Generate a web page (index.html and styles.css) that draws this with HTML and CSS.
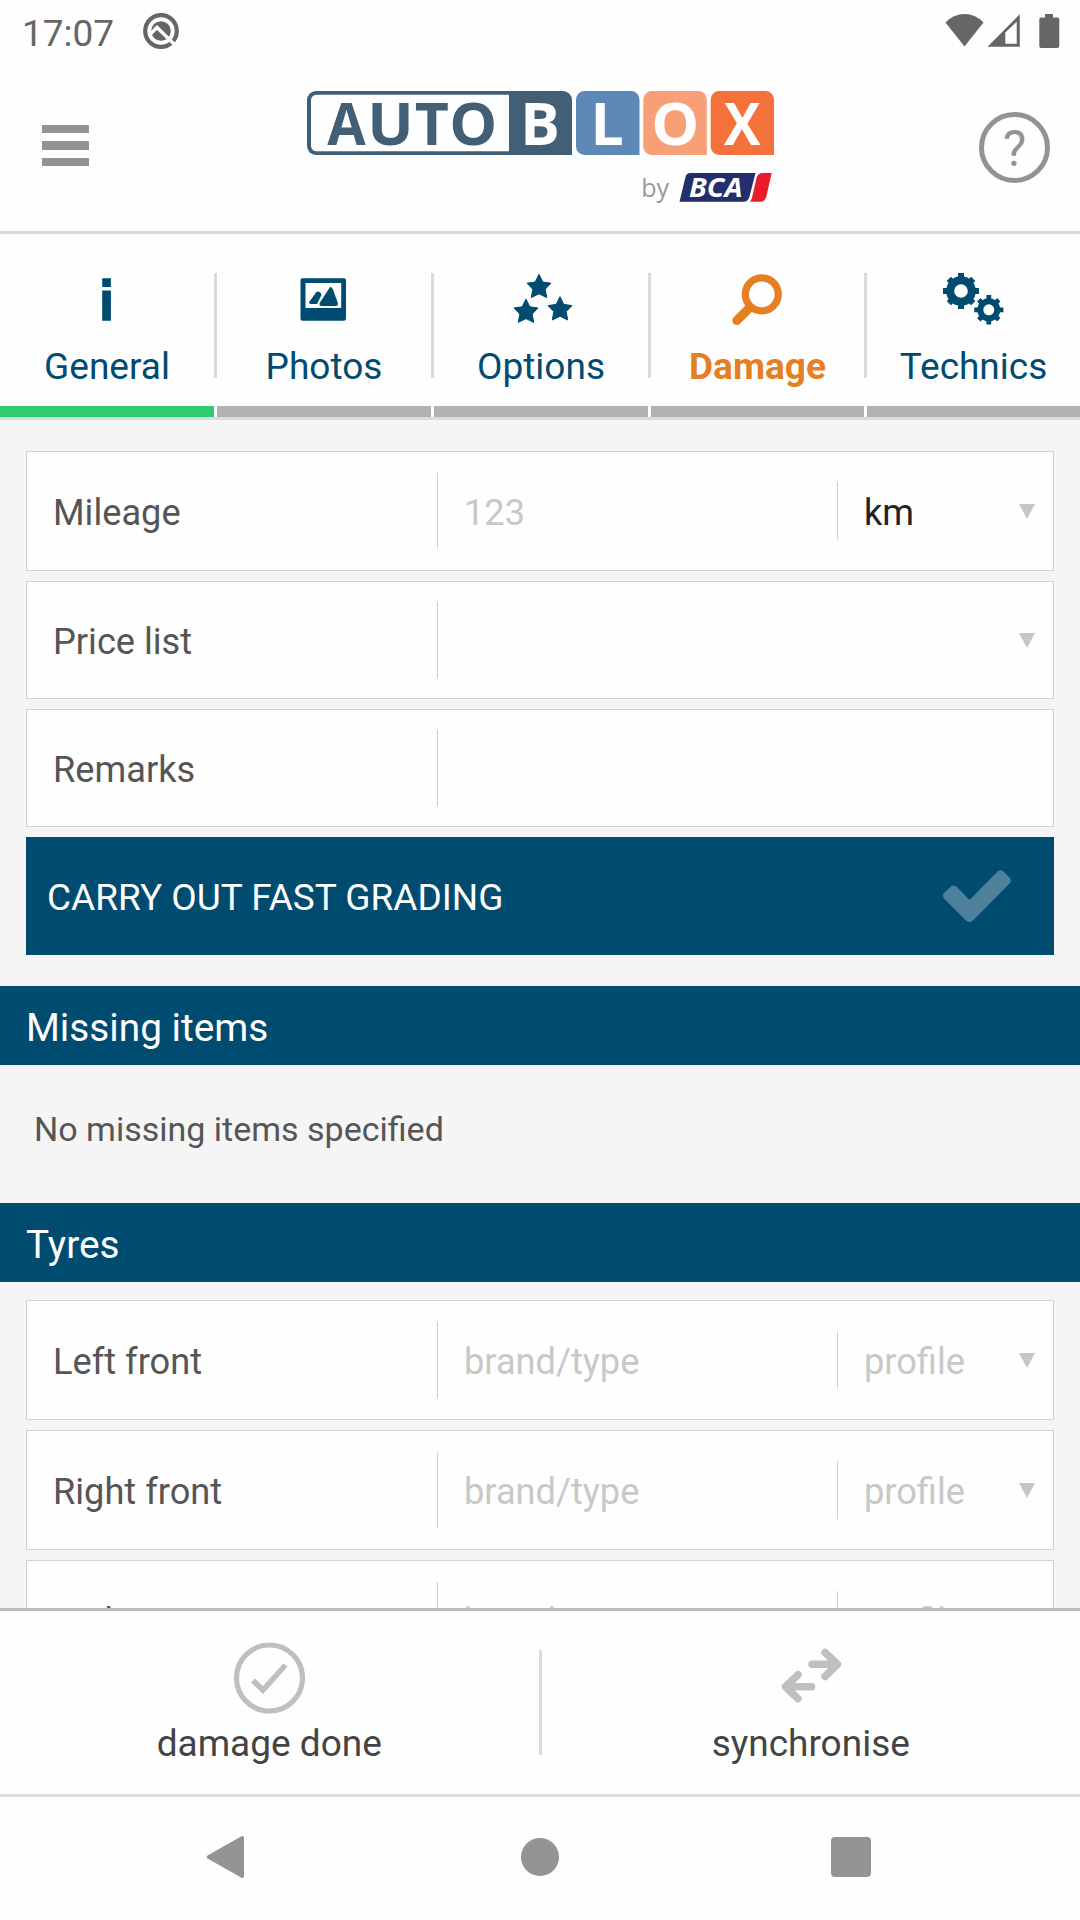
FILE: index.html
```html
<!DOCTYPE html>
<html lang="en">
<head>
<meta charset="utf-8">
<title>AutoBlox</title>
<link rel="stylesheet" href="styles.css">
</head>
<body>
<div class="statusbar">
  <div class="status-left">
    <span class="clock">17:07</span>
    <svg class="status-app" viewBox="0 0 36 36" width="36" height="36">
      <circle cx="18" cy="18" r="15.8" fill="none" stroke="#666" stroke-width="4.2"/>
      <circle cx="18" cy="18" r="9.8" fill="#666"/>
      <path d="M7.500 21 14 14.500 31 31" fill="none" stroke="#fefefe" stroke-width="3.4"/>
    </svg>
  </div>
  <svg class="status-icons" viewBox="0 0 116 36" width="116" height="36" fill="#666">
    <path d="M.5 10.500Q8.500 2 19.500 2T38.500 10.500L19.500 34.500Z"/>
    <path fill-rule="evenodd" d="M42.500 34.800H74.800V2.300ZM60.300 31.700V20.500L71.700 9.800V31.700Z"/>
    <path d="M100 2h8v3.500h4.500q1.800 0 1.800 1.800v26.900q0 1.800-1.800 1.800h-16.400q-1.800 0-1.800-1.800V7.300q0-1.800 1.800-1.800H100Z"/>
  </svg>
</div>

<header class="header">
  <div class="menu"><span class="menu-bar"></span><span class="menu-bar"></span><span class="menu-bar"></span></div>
  <svg class="logo" viewBox="307 70 468 150" width="468" height="150">
    <path fill="#435f76" d="M316 91H563a9 9 0 0 1 9 9V155H316a9 9 0 0 1-9-9V100a9 9 0 0 1 9-9Z"/>
    <path fill="#fefefe" d="M316.500 94.700H509V151.300H316.500a5.500 5.500 0 0 1-5.500-5.500V100.200a5.500 5.500 0 0 1 5.500-5.500Z"/>
    <path fill="#5d88b8" d="M584 91H631a8.500 8.500 0 0 1 8.500 8.500V155H584.500a8.500 8.500 0 0 1-8.500-8.500V99.500a8.500 8.500 0 0 1 8.500-8.500Z"/>
    <path fill="#f79f77" d="M652 91H698.300a8.500 8.500 0 0 1 8.500 8.500V155H651.800a8.500 8.500 0 0 1-8.500-8.500V99.500a8.500 8.500 0 0 1 8.500-8.500Z"/>
    <path fill="#f4713c" d="M719 91H765.500a8.500 8.500 0 0 1 8.500 8.500V155H719.200a8.500 8.500 0 0 1-8.500-8.500V99.500a8.500 8.500 0 0 1 8.500-8.500Z"/>
    <g class="logo-text" fill="#435f76">
      <text x="327.300" y="145.300" textLength="38.500" lengthAdjust="spacingAndGlyphs">A</text>
      <text x="367.200" y="145.300" textLength="46.500" lengthAdjust="spacingAndGlyphs">U</text>
      <text x="414.800" y="145.300">T</text>
      <text x="449.200" y="145.300" textLength="48" lengthAdjust="spacingAndGlyphs">O</text>
    </g>
    <g class="logo-text" fill="#fefefe">
      <text x="520.300" y="145.300">B</text>
      <text x="590.600" y="145.300">L</text>
      <text x="651.200" y="145.300" textLength="48" lengthAdjust="spacingAndGlyphs">O</text>
      <text x="724" y="145.300" textLength="36.500" lengthAdjust="spacingAndGlyphs">X</text>
    </g>
    <text class="logo-by" x="641.200" y="197">by</text>
    <path fill="#232f6b" d="M690 173H755.500L749.500 196.500Q748 201.800 743.500 201.800H679.500L685.500 177Q686.500 173 690 173Z"/>
    <path fill="#ea1c2a" d="M762.500 173H771.700L766.500 196Q765 201.800 760.500 201.800H750Q751.500 200 752.300 196.500L756.500 178Q758 173 762.500 173Z"/>
    <text class="logo-bca" x="689" y="197" textLength="53.500" lengthAdjust="spacingAndGlyphs">BCA</text>
  </svg>
  <div class="help">?</div>
</header>

<nav class="tabs">
  <div class="tab tab-active">
    <div class="tab-body">
      <svg class="tab-icon" viewBox="0 0 60 56" width="60" height="56" fill="#004b70"><path d="M25.200 7.300h8.700V16h-8.700ZM25.200 19.400h8.700v30.300h-8.700Z"/></svg>
      <span>General</span>
    </div>
  </div>
  <div class="tab">
    <div class="tab-body">
      <svg class="tab-icon" viewBox="0 0 60 56" width="60" height="56" fill="#004b70">
        <path fill-rule="evenodd" d="M8.500 7.300H50a2 2 0 0 1 2 2V47.700a2 2 0 0 1-2 2H8.500a2 2 0 0 1-2-2V9.300a2 2 0 0 1 2-2ZM11.500 12V37H47.200V12Z"/>
        <path d="M34.700 18Q36.500 14 38.800 18L43.700 31.500Q44.500 35 41.500 35H27.500Q24.500 35 26 31.500ZM15.500 30.500 22 21.500Q24.500 19 27 22.500L27.500 24 23 33H17.500Q14 33 15.500 30.500Z"/>
      </svg>
      <span>Photos</span>
    </div>
  </div>
  <div class="tab">
    <div class="tab-body">
      <svg class="tab-icon" viewBox="0 0 60 56" width="60" height="56" fill="#004b70">
        <defs><path id="star" d="M0-12.500 3.800-4.800 12-3.600 6.200 2.400 7.700 10.800 0 7-7.700 10.800-6.200 2.400-12-3.600-3.800-4.800Z"/></defs>
        <g stroke="#004b70" stroke-width="1" stroke-linejoin="round">
          <use href="#star" x="28" y="15.800"/><use href="#star" x="15" y="40.600"/><use href="#star" x="49" y="38.200"/>
        </g>
      </svg>
      <span>Options</span>
    </div>
  </div>
  <div class="tab tab-damage">
    <div class="tab-body">
      <svg class="tab-icon" viewBox="0 0 60 56" width="60" height="56" fill="none" stroke="#e67e22">
        <circle cx="33.800" cy="23.300" r="16.500" stroke-width="7.200"/>
        <path d="M21.800 36.500 8.800 49.500" stroke-width="9" stroke-linecap="round"/>
      </svg>
      <span>Damage</span>
    </div>
  </div>
  <div class="tab">
    <div class="tab-body">
      <svg class="tab-icon" viewBox="0 0 60 56" width="60" height="56">
        <g fill="none" stroke="#004b70">
          <circle cx="17" cy="20" r="10.800" stroke-width="8"/>
          <path stroke-width="6" d="M17 2V8M17 32V38M-1 20H5M29 20H35M4.800 7.800 8.500 11.500M25.500 28.500 29.200 32.200M29.200 7.800 25.500 11.500M8.500 28.500 4.800 32.200"/>
          <circle cx="44.800" cy="38.800" r="8.500" stroke-width="6"/>
          <path stroke-width="4.800" d="M44.800 24V29M44.800 48.500V53.600M30.200 38.800H35M54.500 38.800H59.400M34.800 28.800 38 32M51.500 45.500 54.800 48.800M54.800 28.800 51.500 32M38 45.500 34.800 48.800"/>
        </g>
      </svg>
      <span>Technics</span>
    </div>
  </div>
</nav>

<main class="content">
  <section class="form">
    <div class="row row-tall">
      <div class="label">Mileage</div>
      <div class="field hint">123</div>
      <div class="select">km</div>
      <svg class="arrow" viewBox="0 0 16 15"><path d="M0 0H16L8 15Z"/></svg>
    </div>
    <div class="row">
      <div class="label">Price list</div>
      <div class="field"></div>
      <svg class="arrow" viewBox="0 0 16 15"><path d="M0 0H16L8 15Z"/></svg>
    </div>
    <div class="row">
      <div class="label">Remarks</div>
      <div class="field"></div>
    </div>
    <div class="grading">
      <span>CARRY OUT FAST GRADING</span>
      <svg viewBox="0 0 70 54" width="70" height="54" fill="#4f819c"><path d="M2.500 23.500 9 17.500Q12 15.500 15 18L27.500 31 55.500 2.500Q58.500 0 61.500 2.500L67.500 8.500Q70 11.500 67.500 14.500L31 51.500Q27.500 54.500 24 51.500L2.500 30Q-.5 26.500 2.500 23.500Z"/></svg>
    </div>
  </section>
  <h2 class="section-title">Missing items</h2>
  <p class="empty">No missing items specified</p>
  <h2 class="section-title">Tyres</h2>
  <section class="form form-tyres">
    <div class="row row-tall">
      <div class="label">Left front</div>
      <div class="field hint">brand/type</div>
      <div class="select hint">profile</div>
      <svg class="arrow" viewBox="0 0 16 15"><path d="M0 0H16L8 15Z"/></svg>
    </div>
    <div class="row row-tall">
      <div class="label">Right front</div>
      <div class="field hint">brand/type</div>
      <div class="select hint">profile</div>
      <svg class="arrow" viewBox="0 0 16 15"><path d="M0 0H16L8 15Z"/></svg>
    </div>
    <div class="row row-tall">
      <div class="label">Right rear</div>
      <div class="field hint">brand/type</div>
      <div class="select hint">profile</div>
      <svg class="arrow" viewBox="0 0 16 15"><path d="M0 0H16L8 15Z"/></svg>
    </div>
  </section>
</main>

<footer class="actions">
  <div class="action">
    <svg viewBox="0 0 72 72" width="72" height="72" fill="none" stroke="#bfbfbf">
      <circle cx="36.500" cy="36" r="33" stroke-width="5.200"/>
      <path stroke-width="5.500" d="M20 38.500 30 48 52.500 23"/>
    </svg>
    <span>damage done</span>
  </div>
  <div class="action-divider"></div>
  <div class="action">
    <svg viewBox="0 0 72 72" width="72" height="72" fill="none" stroke="#bfbfbf" stroke-width="7.500" stroke-linecap="round" stroke-linejoin="round">
      <path d="M37 22.300H61.500M50 10.500 62.500 22.300 50 34.500M36.500 44.700H12M23 32.700 10.500 44.700 23 56.700"/>
    </svg>
    <span>synchronise</span>
  </div>
</footer>

<div class="sysnav">
  <svg viewBox="0 0 48 48" width="48" height="48"><path d="M4.500 22.500 38.500 3.300Q41 2.300 41 5V43Q41 45.700 38.500 44.700L4.500 25.500Q2.800 24 4.500 22.500Z"/></svg>
  <svg viewBox="0 0 48 48" width="48" height="48"><circle cx="25" cy="24" r="19"/></svg>
  <svg viewBox="0 0 48 48" width="48" height="48"><rect x="4" y="4" width="40" height="40" rx="4"/></svg>
</div>
</body>
</html>
```

FILE: styles.css
```css
* {
  box-sizing: border-box;
}

body {
  margin: 0;
  width: 1080px;
  height: 1920px;
  overflow: hidden;
  display: flex;
  flex-direction: column;
  background: #fefefe;
  color: #555;
  font-family: Roboto, "Liberation Sans", sans-serif;
  font-size: 37px;
}

svg {
  display: block;
}

/* Android status bar */
.statusbar {
  height: 66px;
  flex: none;
  display: flex;
  justify-content: space-between;
  padding: 12px 19px 0 22px;
}

.status-left {
  display: flex;
  gap: 29px;
}

.clock {
  color: #666;
  font-size: 37px;
  line-height: 43px;
}

.status-app {
  margin-top: 1px;
}

/* App header */
.header {
  height: 168px;
  flex: none;
  display: flex;
  align-items: flex-start;
  padding: 4px 30px 0 42px;
  border-bottom: 3px solid #dadada;
}

.menu {
  width: 47px;
  margin-top: 55px;
  display: flex;
  flex-direction: column;
  gap: 8px;
}

.menu-bar {
  height: 8.400px;
  background: #939393;
}

.logo {
  margin-left: 218px;
}

.logo-text {
  font: 700 59px "Open Sans", sans-serif;
}

.logo-by {
  font: 400 25px "Open Sans", sans-serif;
  fill: #999;
}

.logo-bca {
  font: italic 700 26px "Open Sans", sans-serif;
  fill: #fefefe;
}

.help {
  width: 71px;
  height: 71px;
  margin: 42px 0 0 auto;
  border: 5.500px solid #939393;
  border-radius: 50%;
  color: #939393;
  font-size: 50px;
  line-height: 65px;
  text-align: center;
}

/* Tabs */
.tabs {
  height: 186px;
  flex: none;
  display: grid;
  grid-template-columns: 217px 217px 217px 216px 213px;
  border-bottom: 3px solid #dcdcdc;
}

.tab {
  display: flex;
  flex-direction: column;
  justify-content: space-between;
  padding-top: 39px;
  color: #004b70;
}

.tab::after {
  content: "";
  height: 11px;
  margin-right: 3px;
  background: #b2b2b2;
}

.tab-active::after {
  background: #2ecc71;
}

.tab:last-child::after {
  margin-right: 0;
}

.tab-body {
  height: 105px;
  display: flex;
  flex-direction: column;
  align-items: center;
  line-height: 44px;
  border-right: 3px solid #dadada;
}

.tab:last-child .tab-body {
  border-right: 0;
}

.tab-icon {
  margin: -2px 0 18px;
  flex: none;
  overflow: visible;
}

.tab-damage {
  color: #e67e22;
  font-weight: 700;
}

/* Scrolling content */
.content {
  height: 1188px;
  flex: none;
  overflow: hidden;
  background: #f5f5f5;
}

.form {
  display: flex;
  flex-direction: column;
  gap: 10px;
  padding: 31px 26px;
}

.form-tyres {
  padding-top: 18px;
}

.row {
  height: 118px;
  flex: none;
  display: flex;
  align-items: center;
  padding-right: 18px;
  background: #fefefe;
  border: 1px solid #d2d2d2;
  font-size: 36.200px;
}

.row-tall {
  height: 120px;
}

.label {
  width: 410px;
  padding: 2px 0 0 26px;
}

.field {
  flex: 1;
  height: 76px;
  padding-left: 26px;
  border-left: 1px solid #d0d0d0;
  line-height: 79px;
}

.select {
  width: 182px;
  height: 58px;
  padding-left: 26px;
  border-left: 1px solid #d0d0d0;
  color: #222;
  line-height: 61px;
}

.select.hint,
.hint {
  color: #c8c8c8;
}

.arrow {
  width: 16px;
  height: 15px;
  margin-top: 1px;
  fill: #c6c6c6;
}

.grading {
  height: 118px;
  display: flex;
  align-items: center;
  justify-content: space-between;
  padding: 0 42px 0 21px;
  background: #004b70;
  color: #fefefe;
}

.grading span {
  padding-top: 2px;
}

.section-title {
  height: 79px;
  margin: 0;
  padding: 2px 0 0 26px;
  background: #004b70;
  color: #fefefe;
  font-size: 38.800px;
  font-weight: 400;
  line-height: 79px;
}

.empty {
  height: 138px;
  margin: 0;
  padding: 44px 34px 0;
  font-size: 34px;
  line-height: 40px;
}

/* Bottom actions */
.actions {
  height: 189px;
  flex: none;
  display: flex;
  border-top: 3px solid #bdbdbd;
  border-bottom: 3px solid #dedede;
  color: #444;
}

.action {
  flex: 1;
  display: flex;
  flex-direction: column;
  align-items: center;
  gap: 8px;
  padding-top: 31px;
  line-height: 44px;
}

.action-divider {
  width: 3px;
  height: 105px;
  margin-top: 39px;
  background: #dadada;
}

/* Android navigation keys */
.sysnav {
  display: flex;
  justify-content: space-between;
  padding: 36px 205px 0 203px;
  fill: #949494;
}
```
